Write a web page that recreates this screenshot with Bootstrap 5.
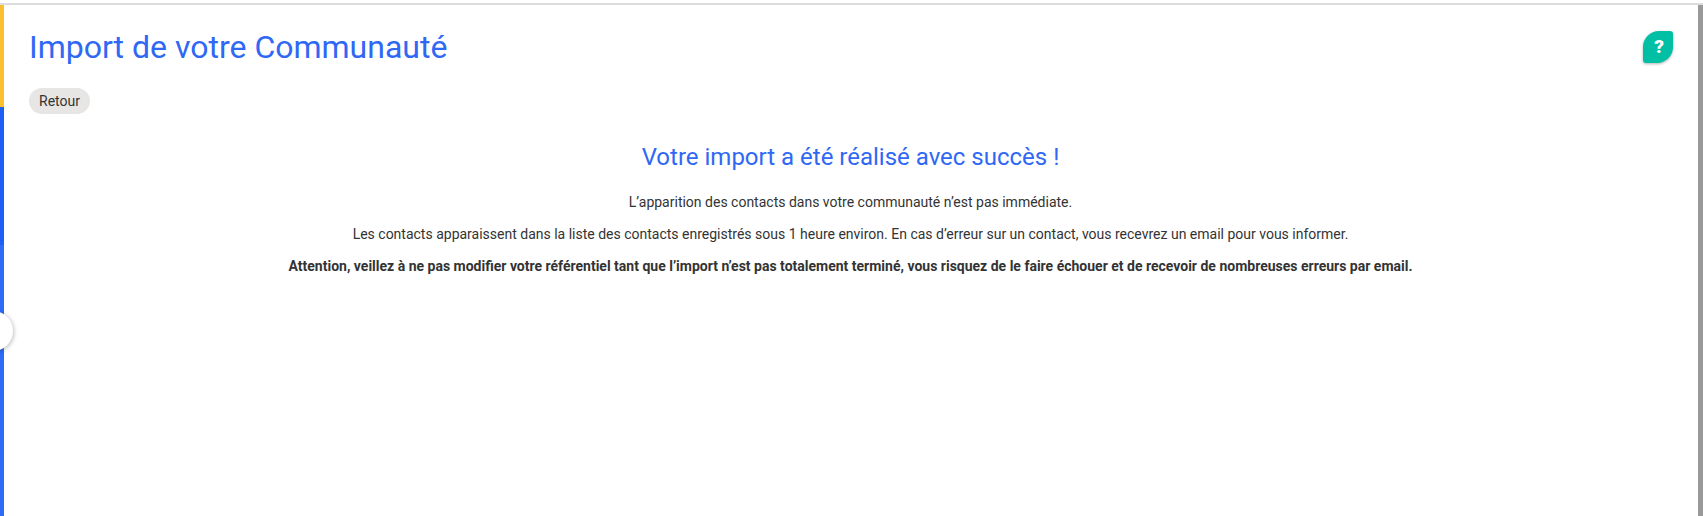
<!DOCTYPE html>
<html lang="fr">
<head>
    <meta charset="UTF-8">
    <meta name="viewport" content="width=device-width, initial-scale=1">
    <title>Import de votre Communauté</title>
    <link href="https://cdn.jsdelivr.net/npm/bootstrap@5.3.3/dist/css/bootstrap.min.css" rel="stylesheet">
    <style>
        html,body{height:100%;overflow:hidden}
        body{background:#fff;font-family:Roboto,"Liberation Sans",sans-serif;color:#333;font-size:14px}
        .top-line{height:5px;border-top:3px solid #fff;background:#ddd}
        .page-wrap{height:511px}
        .side-rail{width:4px;flex:none}
        .rail-yellow{height:102px;background:#fbc02d}
        .rail-dark{height:138px;background:#1e5ff5}
        .rail-light{flex:1;background:#2f6bf6}
        .rail-handle{position:absolute;left:-27px;top:311px;width:40px;height:40px;border-radius:50%;background:#fff;box-shadow:1px 1px 4px rgba(0,0,0,.25)}
        .main-area{padding:0 26px 0 25px;min-width:0}
        .page-title{font-size:32px;font-weight:400;color:#2f68f5;line-height:38px;margin:23px 0 0}
        .back-pill{display:inline-block;margin:22px 0 0;padding:0 10px;height:26px;line-height:26px;border-radius:13px;background:#e8e6e4;color:#333;font-size:14px;text-decoration:none}
        .sub-title{font-size:24px;font-weight:400;color:#2f68f5;line-height:30px;margin:28px 0 0}
        .msg-text{margin:0;line-height:20px;padding-top:11.5px}
        .msg-first{padding-top:20px}
        .msg-last{padding-top:12.5px}
        .help-leaf{position:absolute;top:31px;right:30px;width:30px;height:32px;padding-left:2px;background:#00bfa5;color:#fff;font-weight:900;font-size:19px;line-height:32px;text-align:center;border-radius:16px 3px 16px 3px;box-shadow:0 1px 3px rgba(0,0,0,.3)}
        .fake-scroll{width:5px;flex:none;background:#999}
    </style>
</head>
<body class="position-relative">
<div class="top-line"></div>
<div class="page-wrap d-flex">
    <div class="side-rail d-flex flex-column">
        <div class="rail-yellow"></div>
        <div class="rail-dark"></div>
        <div class="rail-light"></div>
    </div>
    <div class="main-area flex-grow-1">
        <h1 class="page-title">Import de votre Communauté</h1>
        <a class="back-pill" href="#">Retour</a>
        <div class="text-center">
            <h2 class="sub-title">Votre import a été réalisé avec succès !</h2>
            <p class="msg-text msg-first">L’apparition des contacts dans votre communauté n’est pas immédiate.</p>
            <p class="msg-text">Les contacts apparaissent dans la liste des contacts enregistrés sous 1 heure environ. En cas d’erreur sur un contact, vous recevrez un email pour vous informer.</p>
            <p class="msg-text msg-last fw-bold">Attention, veillez à ne pas modifier votre référentiel tant que l’import n’est pas totalement terminé, vous risquez de le faire échouer et de recevoir de nombreuses erreurs par email.</p>
        </div>
    </div>
    <div class="fake-scroll"></div>
</div>
<div class="rail-handle"></div>
<div class="help-leaf">?</div>
<script src="https://cdn.jsdelivr.net/npm/bootstrap@5.3.3/dist/js/bootstrap.bundle.min.js"></script>
</body>
</html>
